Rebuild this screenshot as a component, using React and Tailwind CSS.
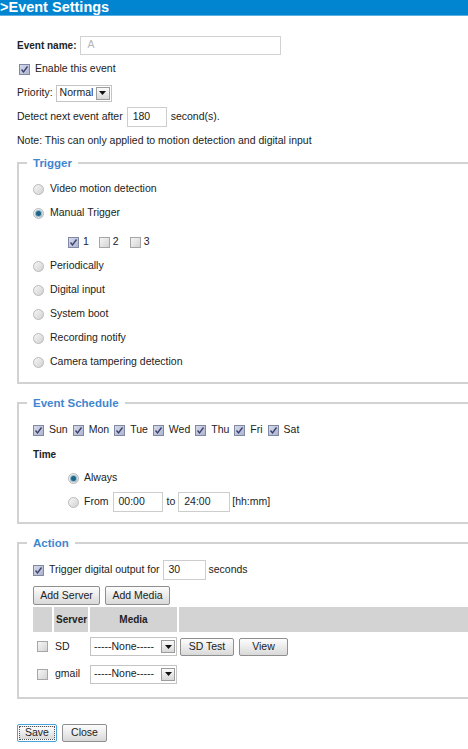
import React from 'react';

function Check({ on }) {
  return (
    <span
      className={
        'inline-flex items-center justify-center w-[11px] h-[11px] shrink-0 border ' +
        (on
          ? 'border-[#8088a3] bg-linear-to-br from-[#d6dbe9] to-[#adb5ce]'
          : 'border-[#a6a6a6] bg-linear-to-br from-[#f6f6f6] to-[#d4d4d4]')
      }
    >
      {on && (
        <svg width="9" height="9" viewBox="0 0 9 9">
          <path d="M1.5 4.5 L3.5 7 L7.5 1.5" fill="none" stroke="#3a3d6e" strokeWidth="1.3" />
        </svg>
      )}
    </span>
  );
}

function Radio({ on }) {
  return (
    <span className="inline-flex items-center justify-center w-[11px] h-[11px] shrink-0 rounded-full border border-[#b9b9b9] bg-linear-to-br from-[#f7f7f7] to-[#d2d2d2]">
      {on && <span className="w-[5px] h-[5px] rounded-full bg-[#1d6688] ring-1 ring-[#8fb8cc]" />}
    </span>
  );
}

function Arrow() {
  return (
    <span className="flex items-center justify-center w-[14px] h-[13px] shrink-0 border border-[#9c9c9c] bg-linear-to-b from-[#fbfbfb] to-[#d8d8d8]">
      <svg width="7" height="4" viewBox="0 0 7 4">
        <path d="M0 0 L7 0 L3.5 4 Z" fill="#111" />
      </svg>
    </span>
  );
}

function Select({ label, w, h }) {
  return (
    <div className={'flex items-center justify-between border border-[#c4c4c4] bg-white pl-[3px] pr-[1px] ' + w + ' ' + h}>
      <span className="whitespace-nowrap">{label}</span>
      <Arrow />
    </div>
  );
}

function Field({ value, w }) {
  return (
    <div className={'flex items-center h-[20px] border border-[#cdcdcd] bg-white pl-[5px] ' + w}>{value}</div>
  );
}

function Btn({ children, w }) {
  return (
    <button className={'flex items-center justify-center border border-[#8f8f8f] rounded-[2px] bg-linear-to-b from-[#fdfdfd] to-[#d9d9d9] text-[#222] ' + w}>
      {children}
    </button>
  );
}

function Box({ title, children, className }) {
  return (
    <fieldset className={'ml-[17px] w-[470px] border-2 border-[#d2d2d2] p-0 ' + className}>
      <legend className="ml-[8px] px-[6px] text-[11.5px] leading-[14px] font-bold text-[#3f86cf]">{title}</legend>
      {children}
    </fieldset>
  );
}

const days = ['Sun', 'Mon', 'Tue', 'Wed', 'Thu', 'Fri', 'Sat'];
const triggers = ['Periodically', 'Digital input', 'System boot', 'Recording notify', 'Camera tampering detection'];

export default function App() {
  return (
    <div className="w-[468px] h-[749px] overflow-hidden bg-white text-[10.5px] text-[#222] font-['Liberation_Sans',Arial,sans-serif]">
      <div className="h-[16px] bg-[#0285d0] border-b border-[#5db0e4] text-white font-bold text-[14.5px] leading-[15px]">
        &gt;Event Settings
      </div>

      <div className="pt-[17px]">
        <div className="h-[24px] flex items-center pl-[17px] gap-[4px]">
          <span className="font-bold text-[10px]">Event name:</span>
          <div className="flex items-center w-[201px] h-[19px] border border-[#d2d2d2] pl-[6px] text-[#b5b5b5]">A</div>
        </div>
        <div className="h-[24px] flex items-center pl-[19px] gap-[5px]">
          <Check on />
          <span>Enable this event</span>
        </div>
        <div className="h-[24px] flex items-center pl-[17px] gap-[3px]">
          <span>Priority:</span>
          <Select label="Normal" w="w-[56px]" h="h-[17px]" />
        </div>
        <div className="h-[24px] flex items-center pl-[17px] gap-[4px]">
          <span>Detect next event after</span>
          <Field value="180" w="w-[40px]" />
          <span>second(s).</span>
        </div>
        <div className="h-[24px] flex items-center pl-[17px]">
          Note: This can only applied to motion detection and digital input
        </div>
      </div>

      <Box title="Trigger" className="mt-[3px]">
        <div className="pl-[14px] pt-[7px] pb-[8px]">
          <div className="h-[24px] flex items-center gap-[6px]">
            <Radio />
            <span>Video motion detection</span>
          </div>
          <div className="h-[24px] flex items-center gap-[6px]">
            <Radio on />
            <span>Manual Trigger</span>
          </div>
          <div className="h-[29px] pt-[5px] flex items-center pl-[35px]">
            <Check on />
            <span className="ml-[4px] mr-[10px]">1</span>
            <Check />
            <span className="ml-[3px] mr-[11px]">2</span>
            <Check />
            <span className="ml-[3px]">3</span>
          </div>
          {triggers.map((t) => (
            <div key={t} className="h-[24px] flex items-center gap-[6px]">
              <Radio />
              <span>{t}</span>
            </div>
          ))}
        </div>
      </Box>

      <Box title="Event Schedule" className="mt-[12px]">
        <div className="pl-[14px] pt-[8px] pb-[8px]">
          <div className="h-[24px] flex items-center gap-[5px]">
            {days.map((d) => (
              <div key={d} className="flex items-center gap-[5px]">
                <Check on />
                <span>{d}</span>
              </div>
            ))}
          </div>
          <div className="h-[24px] flex items-center font-bold text-[10px]">Time</div>
          <div className="h-[24px] flex items-center gap-[5px] pl-[35px]">
            <Radio on />
            <span>Always</span>
          </div>
          <div className="h-[24px] flex items-center pl-[35px]">
            <Radio />
            <span className="ml-[5px] mr-[4px]">From</span>
            <Field value="00:00" w="w-[50px]" />
            <span className="ml-[4px] mr-[3px]">to</span>
            <Field value="24:00" w="w-[52px]" />
            <span className="ml-[2px]">[hh:mm]</span>
          </div>
        </div>
      </Box>

      <Box title="Action" className="mt-[12px]">
        <div className="pl-[14px] pt-[8px] pb-[9px]">
          <div className="h-[24px] flex items-center">
            <Check on />
            <span className="ml-[5px] mr-[3px]">Trigger digital output for</span>
            <Field value="30" w="w-[43px]" />
            <span className="ml-[3px]">seconds</span>
          </div>
          <div className="flex gap-[5px] mt-[4px]">
            <Btn w="w-[67px] h-[19px]">Add Server</Btn>
            <Btn w="w-[65px] h-[19px]">Add Media</Btn>
          </div>
          <div className="grid grid-cols-[19px_34px_87px_1fr] gap-x-[2px] mt-[2px]">
            <div className="h-[25px] bg-[#d3d3d3]" />
            <div className="h-[25px] bg-[#d3d3d3] flex items-center pl-[2px] font-bold text-[10px]">Server</div>
            <div className="h-[25px] bg-[#d3d3d3] flex items-center justify-center font-bold text-[10px]">Media</div>
            <div className="h-[25px] bg-[#d3d3d3]" />

            <div className="h-[28px] flex items-center justify-center pt-[1px]"><Check /></div>
            <div className="h-[28px] flex items-center pl-[1px] pt-[1px]">SD</div>
            <div className="h-[28px] flex items-center pt-[1px]"><Select label="-----None-----" w="w-[87px]" h="h-[19px]" /></div>
            <div className="h-[28px] flex items-center gap-[5px] pl-[1px] pt-[2px]">
              <Btn w="w-[54px] h-[18px]">SD Test</Btn>
              <Btn w="w-[49px] h-[18px]">View</Btn>
            </div>

            <div className="h-[28px] flex items-center justify-center"><Check /></div>
            <div className="h-[28px] flex items-center pl-[1px]">gmail</div>
            <div className="h-[28px] flex items-center"><Select label="-----None-----" w="w-[87px]" h="h-[19px]" /></div>
            <div className="h-[28px]" />
          </div>
        </div>
      </Box>

      <div className="flex gap-[5px] pl-[17px] mt-[25px]">
        <div className="w-[40px] h-[18px] rounded-[2px] border border-[#4aa3dc] p-[1px]">
          <div className="w-full h-full flex items-center justify-center border border-dotted border-[#555] bg-linear-to-b from-[#fdfdfd] to-[#d9d9d9]">
            Save
          </div>
        </div>
        <Btn w="w-[45px] h-[18px]">Close</Btn>
      </div>
    </div>
  );
}
